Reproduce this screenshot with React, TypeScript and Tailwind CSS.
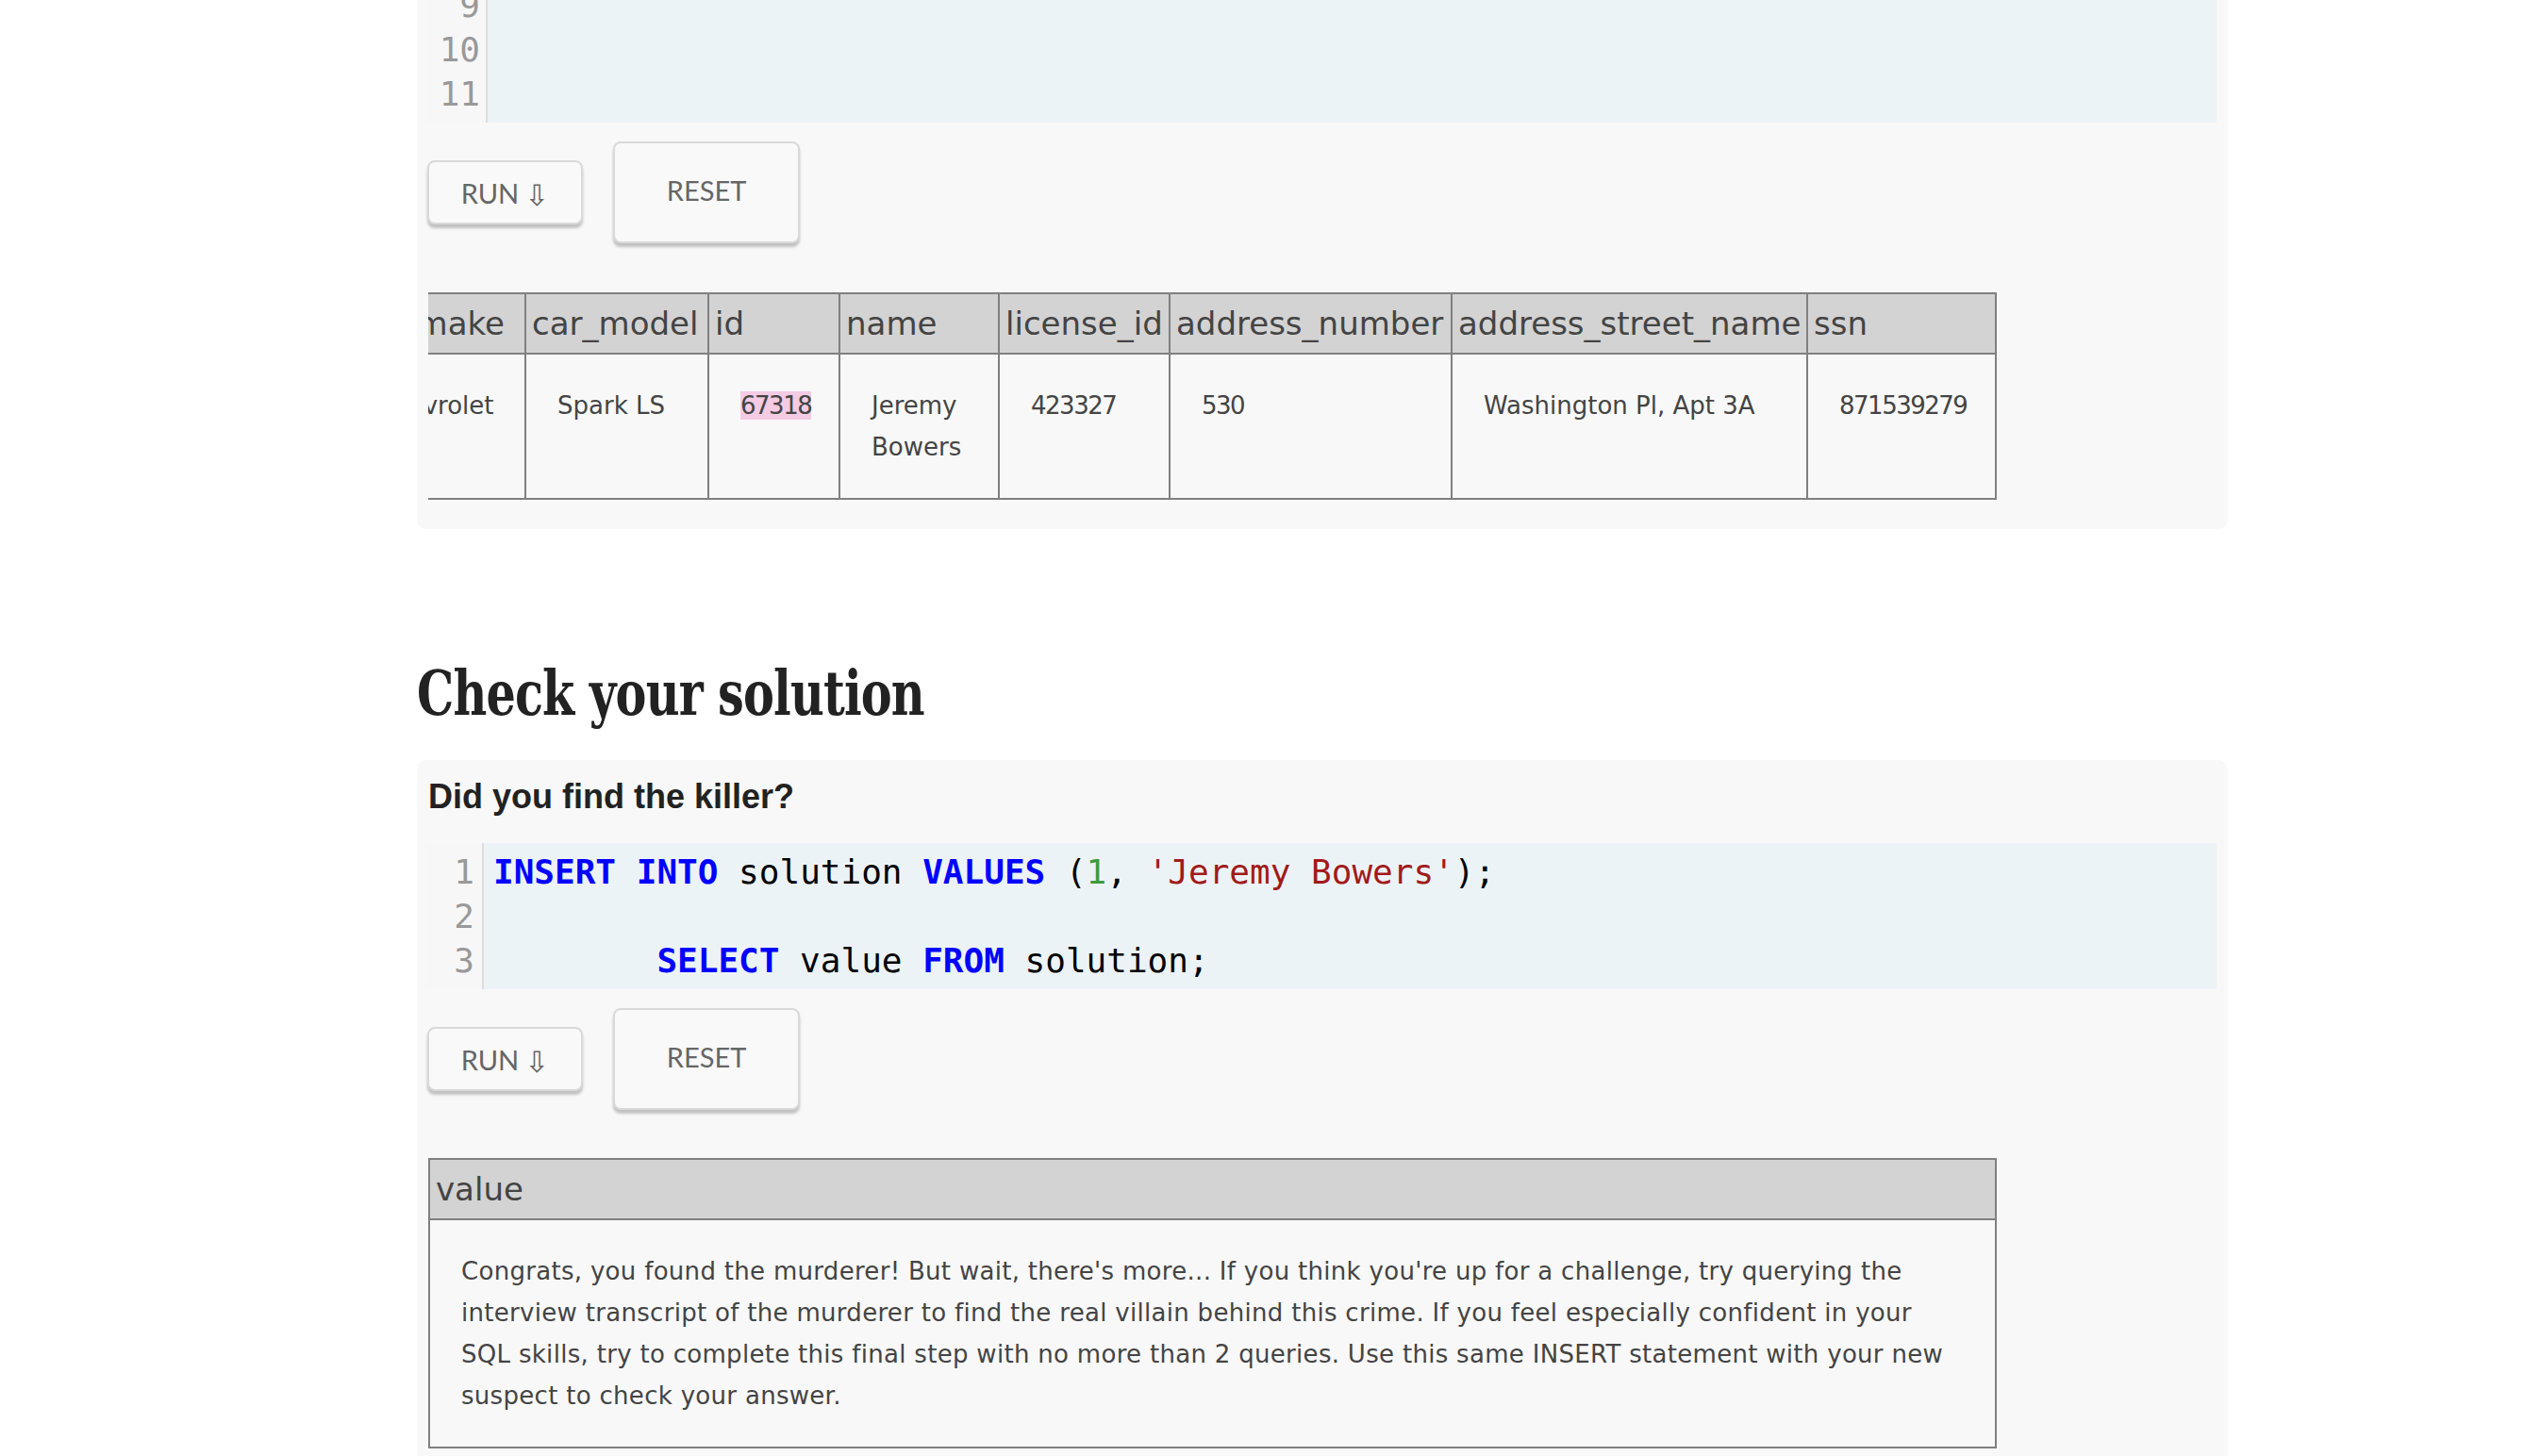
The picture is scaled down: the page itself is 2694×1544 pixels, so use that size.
import React from 'react';

type Tok = { t: string; c?: string };

const kw = "font-bold text-[#0000ff]";

const solutionCode: Tok[][] = [
  [
    { t: 'INSERT', c: kw },
    { t: ' ' },
    { t: 'INTO', c: kw },
    { t: ' solution ' },
    { t: 'VALUES', c: kw },
    { t: ' (' },
    { t: '1', c: 'text-[#3d9a3d]' },
    { t: ', ' },
    { t: "'Jeremy Bowers'", c: 'text-[#a11a1a]' },
    { t: ');' },
  ],
  [],
  [
    { t: '        ' },
    { t: 'SELECT', c: kw },
    { t: ' value ' },
    { t: 'FROM', c: kw },
    { t: ' solution;' },
  ],
];

function CodeBox({
  lines,
  start,
  gutter,
  pad,
}: {
  lines: Tok[][];
  start: number;
  gutter: string;
  pad: string;
}) {
  return (
    <div className="flex bg-[#ecf3f6] font-['DejaVu_Sans_Mono',monospace] text-[36px] leading-[47px]">
      <div className={`shrink-0 border-r-2 border-[#dddddd] bg-[#f7f7f7] text-right text-[#999999] ${gutter} ${pad}`}>
        {lines.map((_, i) => (
          <div key={i}>{start + i}</div>
        ))}
      </div>
      <div className={`min-w-0 flex-1 whitespace-pre pl-[10px] text-black ${pad}`}>
        {lines.map((line, i) => (
          <div key={i} className="h-[47px]">
            {line.map((tok, j) => (
              <span key={j} className={tok.c}>
                {tok.t}
              </span>
            ))}
          </div>
        ))}
      </div>
    </div>
  );
}

function Buttons() {
  return (
    <div className="flex items-center gap-[32px] font-['Lato','DejaVu_Sans',sans-serif] text-[29px] text-[#666666]">
      <button
        type="button"
        className="flex h-[68px] w-[165px] items-center justify-center rounded-[8px] border-2 border-[#d9d9d9] bg-[#f9f9f9] pt-[2px] shadow-[0_4px_3px_rgba(0,0,0,0.22)]"
      >
        RUN <span className="ml-[6px] mt-[4px] font-['DejaVu_Sans',sans-serif] text-[31px] leading-none">⇩</span>
      </button>
      <button
        type="button"
        className="flex h-[108px] w-[198px] items-center justify-center rounded-[8px] border-2 border-[#d9d9d9] bg-[#f9f9f9] pb-[4px] shadow-[0_4px_3px_rgba(0,0,0,0.22)]"
      >
        RESET
      </button>
    </div>
  );
}

const num = 'tracking-[-1.5px]';

const cols = [
  { key: 'car_make', w: 'w-[193px]', v: 'Chevrolet', c: '' },
  { key: 'car_model', w: 'w-[194px]', v: 'Spark LS', c: '' },
  { key: 'id', w: 'w-[139px]', v: '67318', hl: true, c: num },
  { key: 'name', w: 'w-[169px]', v: 'Jeremy Bowers', c: '' },
  { key: 'license_id', w: 'w-[181px]', v: '423327', c: num },
  { key: 'address_number', w: 'w-[299px]', v: '530', c: num },
  { key: 'address_street_name', w: 'w-[377px]', v: 'Washington Pl, Apt 3A', c: '' },
  { key: 'ssn', w: 'w-[200px]', v: '871539279', c: num },
];

const th = "border-2 border-[#808080] bg-[#d3d3d3] px-[6px] py-[7px] text-left text-[34px] font-normal leading-[48px] text-[#444444]";
const td = "border-2 border-[#808080] px-[33px] py-[32px] text-left align-top text-[26px] leading-[44px] text-[#444444]";

export default function App() {
  return (
    <div className="min-h-screen overflow-hidden bg-white font-['DejaVu_Sans',sans-serif]">
      <div className="ml-[442px] w-[1920px] pb-[40px]">
        {/* query panel, scrolled past the top */}
        <div className="-mt-[18px] rounded-b-[10px] bg-[#f8f8f8] pb-[31px] pl-[11px] pr-[12px]">
          <CodeBox lines={[[], [], []]} start={9} gutter="w-[64px] pr-[6px]" pad="pb-[7px]" />
          <div className="mt-[20px]">
            <Buttons />
          </div>
          <div className="ml-[1px] mt-[52px] flex w-[1663px] justify-end overflow-hidden">
            <table className="w-[1752px] shrink-0 table-fixed border-collapse">
              <colgroup>
                {cols.map((c) => (
                  <col key={c.key} className={c.w} />
                ))}
              </colgroup>
              <thead>
                <tr>
                  {cols.map((c) => (
                    <th key={c.key} className={th}>
                      {c.key}
                    </th>
                  ))}
                </tr>
              </thead>
              <tbody>
                <tr>
                  {cols.map((c) => (
                    <td key={c.key} className={`${td} ${c.c}`}>
                      {c.hl ? <span className="bg-[#f4cbe3]">{c.v}</span> : c.v}
                    </td>
                  ))}
                </tr>
              </tbody>
            </table>
          </div>
        </div>

        <h2 className="mb-[31px] mt-[134px] origin-left scale-x-[0.83] font-['DejaVu_Serif_Condensed','DejaVu_Serif',serif] text-[66px] font-bold leading-[80px] tracking-[-1px] text-[#222222] [font-stretch:condensed]">
          Check your solution
        </h2>

        <div className="rounded-[10px] bg-[#f8f8f8] pb-[31px] pl-[11px] pr-[12px] pt-[18px]">
          <p className="ml-[1px] font-['Liberation_Sans',Arial,sans-serif] text-[36px] font-bold leading-[42px] text-[#222222]">
            Did you find the killer?
          </p>
          <div className="mt-[28px]">
            <CodeBox lines={solutionCode} start={1} gutter="w-[60px] pr-[8px]" pad="py-[7px]" />
          </div>
          <div className="mt-[20px]">
            <Buttons />
          </div>
          <div className="ml-[1px] mt-[51px] w-[1663px]">
            <table className="w-full border-collapse">
              <thead>
                <tr>
                  <th className={th}>value</th>
                </tr>
              </thead>
              <tbody>
                <tr>
                  <td className={`${td} tracking-[0.3px]`}>
                    Congrats, you found the murderer! But wait, there's more... If you think you're up for a challenge, try querying the
                    <br />
                    interview transcript of the murderer to find the real villain behind this crime. If you feel especially confident in your
                    <br />
                    SQL skills, try to complete this final step with no more than 2 queries. Use this same INSERT statement with your new
                    <br />
                    suspect to check your answer.
                  </td>
                </tr>
              </tbody>
            </table>
          </div>
        </div>
      </div>
    </div>
  );
}
